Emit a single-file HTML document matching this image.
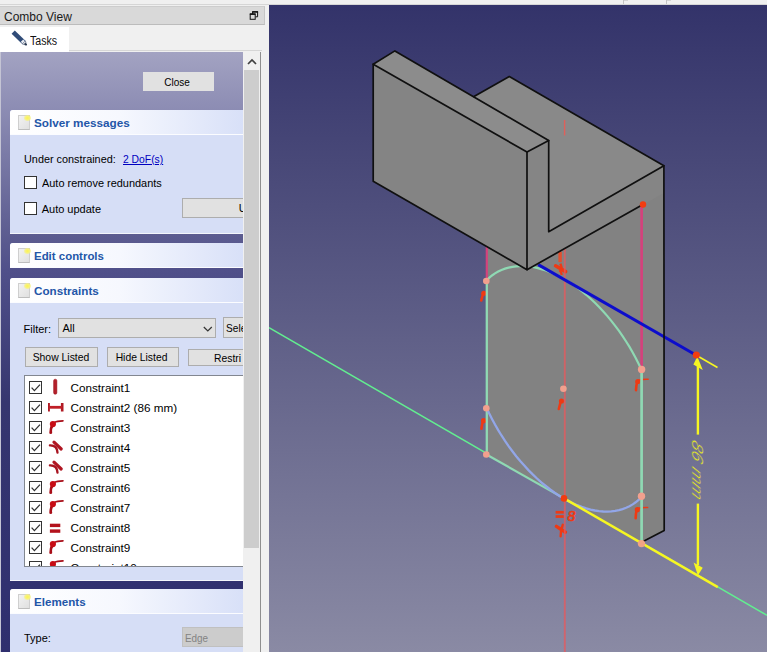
<!DOCTYPE html>
<html>
<head>
<meta charset="utf-8">
<title>FreeCAD Sketcher</title>
<style>
html,body{margin:0;padding:0;}
body{width:767px;height:652px;overflow:hidden;background:#f0f0f0;font-family:"Liberation Sans",sans-serif;font-size:11px;color:#000;position:relative;}
.abs{position:absolute;}
#topline{left:0;top:4.2px;width:767px;height:1px;background:#d6d6d6;}
#titlebar{left:0;top:6px;width:265px;height:19px;background:#d9d9d9;border-bottom:1px solid #bcbcbc;border-top:1px solid #cdcdcd;border-right:1px solid #c6c6c6;box-sizing:border-box;}
#titlebar span{position:absolute;left:4px;top:2.5px;font-size:12px;color:#1a1a1a;white-space:nowrap;}
#tab{left:0;top:27px;width:69px;height:25px;background:#fff;}
#tab span{position:absolute;left:30.2px;top:7px;font-size:12px;color:#111;transform:scaleX(0.885);transform-origin:left;white-space:nowrap;}
#tabline{left:69px;top:50px;width:193px;height:1px;background:#d6d6d6;}
#panel{left:1px;top:52px;width:242.4px;height:600px;overflow:hidden;background:linear-gradient(to bottom,#a3a3c2 0px,#8d8db4 55px,#5c5c90 183px,#50508a 218px,#36366f 350px,#313170 540px,#2f2f6e 600px);}
#panelborderL{left:0;top:52px;width:1.5px;height:600px;background:#c4c4d4;}
#sbtrack{left:243.4px;top:52px;width:17px;height:600px;background:#f0f0f0;}
#sbthumb{left:244px;top:70px;width:15.4px;height:478px;background:#cdcdcd;}
#panelborderR{left:260.4px;top:52px;width:1px;height:600px;background:#8f8f8f;}
#panelborderT{left:0;top:51.5px;width:261px;height:1px;background:#a8a8b4;}
.sec{position:absolute;left:9px;width:260px;background:#d6def6;border-radius:3px 0 0 0;border-bottom:1px solid #f4f6fc;box-sizing:border-box;}
.hdr{position:absolute;left:0;top:0;width:260px;height:25px;background:linear-gradient(to right,#ffffff 0,#f6f8fe 110px,#d8e0f8 234px);border-radius:3px 0 0 0;box-shadow:inset 0 -1px 0 #fbfcff;}
.hdr b{position:absolute;left:24.4px;top:6.7px;font-size:11px;color:#2356a8;font-weight:bold;white-space:nowrap;transform-origin:left;}
.ico{position:absolute;left:8px;top:5px;width:12px;height:14.5px;background:linear-gradient(135deg,#f2f2f2,#e0e0e0);border:1px solid #cfcfcf;border-bottom-color:#bdbdbd;box-sizing:border-box;}
.ico i{position:absolute;right:-1.5px;top:-1.5px;width:7px;height:6px;border-radius:3px;background:radial-gradient(ellipse,#fbf450 0,#f8f27a 40%,rgba(248,244,160,0) 100%);}
.btn{position:absolute;background:#e1e1e1;border:1px solid #adadad;box-sizing:border-box;text-align:center;font-size:11px;color:#000;white-space:nowrap;}
.btn span{display:inline-block;}
.cb{position:absolute;width:13px;height:13px;border:1px solid #333;background:#fff;box-sizing:border-box;}
.t{position:absolute;white-space:nowrap;transform-origin:left;}
.row{position:absolute;left:0;width:240px;height:20px;}
.ck{position:absolute;left:4px;top:3.5px;width:13px;height:13px;border:1px solid #333;box-sizing:border-box;background:#fff;}
.ck svg{position:absolute;left:-1px;top:-1px;}
.ci{position:absolute;left:23.2px;top:0.1px;}
.row span{position:absolute;left:45.5px;top:3.1px;font-size:11.7px;white-space:nowrap;color:#000;}
#view{left:269px;top:5px;width:498px;height:647px;overflow:hidden;background:linear-gradient(to bottom,#33336a 0,#8a8aa4 100%);}
</style>
</head>
<body>
<div class="abs" id="topline"></div>
<div class="abs" style="left:623px;top:0;width:1px;height:4px;background:#c4c4c4;"></div><div class="abs" style="left:624px;top:0;width:4px;height:1px;background:#d4d4d4;"></div><div class="abs" style="left:666px;top:0;width:1px;height:4px;background:#c4c4c4;"></div><div class="abs" style="left:667px;top:0;width:4px;height:1px;background:#d4d4d4;"></div>
<div class="abs" id="titlebar"><span>Combo View</span>
<svg class="abs" style="left:249px;top:3px;" width="11" height="12" viewBox="0 0 11 12"><path d="M3.6,4 V2 H8.6 V6.8 H6.6" fill="none" stroke="#111" stroke-width="1"/><path d="M3.1,1.8 H9.1" stroke="#111" stroke-width="1.4"/><rect x="1.2" y="4.3" width="5" height="5" fill="none" stroke="#111" stroke-width="1"/><path d="M0.8,4 H6.6" stroke="#111" stroke-width="1.5"/></svg>
</div>
<div class="abs" id="tab"><svg class="abs" style="left:10px;top:3px;" width="20" height="18" viewBox="0 0 20 18"><path d="M3.2,2.2 L13.8,12.4" stroke="#304c78" stroke-width="4.6" stroke-linecap="butt"/><path d="M12,10.6 L15.6,14.2" stroke="#e8ecf2" stroke-width="3.4"/><path d="M12.2,14 L16.4,15 L15.4,10.8 Z" fill="#f4f4f4" stroke="#50607c" stroke-width="0.7"/><path d="M14.6,13.4 L16.6,15.2" stroke="#26344c" stroke-width="1.6"/></svg><span>Tasks</span></div>
<div class="abs" id="tabline"></div>
<div class="abs" id="panelborderT"></div>
<div class="abs" id="panelborderL"></div>
<div class="abs" id="panel">
  <div class="btn" style="left:141.6px;top:20.2px;width:71.6px;height:18.8px;line-height:18.4px;border-color:#e1e1e1;"><span style="transform:scaleX(0.91);position:relative;left:-1px;">Close</span></div>

  <div class="sec" style="top:58px;height:124px;">
    <div class="hdr"><div class="ico"><i></i></div><b style="transform:scaleX(1.065);">Solver messages</b></div>
    <div class="t" style="left:13.7px;top:43px;transform:scaleX(0.987);">Under constrained:</div>
    <div class="t" style="left:112.6px;top:43px;color:#0000c0;text-decoration:underline;transform:scaleX(0.94);">2 DoF(s)</div>
    <div class="cb" style="left:14px;top:66.2px;"></div>
    <div class="t" style="left:31.7px;top:67px;transform:scaleX(0.994);">Auto remove redundants</div>
    <div class="cb" style="left:14px;top:92.2px;"></div>
    <div class="t" style="left:31.7px;top:93px;">Auto update</div>
    <div class="btn" style="left:172.4px;top:88px;width:90px;height:20.2px;line-height:18.6px;text-align:left;padding-left:55.3px;">U</div>
  </div>

  <div class="sec" style="top:191px;height:25px;border-bottom:none;">
    <div class="hdr"><div class="ico"><i></i></div><b style="transform:scaleX(1.04);">Edit controls</b></div>
  </div>

  <div class="sec" style="top:226px;height:303px;">
    <div class="hdr"><div class="ico"><i></i></div><b style="transform:scaleX(1.06);">Constraints</b></div>
    <div class="t" style="left:13.6px;top:44.6px;">Filter:</div>
    <div class="btn" style="left:48px;top:40px;width:157.5px;height:19.8px;text-align:left;padding-left:3.5px;line-height:18.6px;">All<svg class="abs" style="left:144px;top:6.5px;" width="10" height="7" viewBox="0 0 10 7"><path d="M0.8,1 L4.8,5 L8.8,1" fill="none" stroke="#333" stroke-width="1.2"/></svg></div>
    <div class="btn" style="left:213.2px;top:39.2px;width:60px;height:20.5px;text-align:left;padding-left:1.6px;line-height:21.6px;"><span style="transform:scaleX(0.92);transform-origin:left;">Sele</span></div>
    <div class="btn" style="left:15.3px;top:68.8px;width:72.7px;height:20.7px;line-height:19.4px;"><span style="transform:scaleX(0.945);position:relative;left:-0.9px;">Show Listed</span></div>
    <div class="btn" style="left:96.5px;top:68.8px;width:72.3px;height:20.7px;line-height:19.4px;"><span style="transform:scaleX(0.94);position:relative;left:-1.3px;">Hide Listed</span></div>
    <div class="btn" style="left:177.6px;top:71.3px;width:90px;height:16.3px;line-height:16px;text-align:left;padding-left:25px;"><span style="transform:scaleX(0.94);transform-origin:left;">Restri</span></div>
    <div class="abs" id="list" style="left:14px;top:97px;width:240px;height:191.6px;background:#fff;border:1px solid #828790;border-right:none;box-sizing:border-box;overflow:hidden;">
<div class="row" style="top:1.5px;"><div class="ck"><svg width="13" height="13" viewBox="0 0 13 13"><path d="M2.6,6.6 L5.4,9.6 L11,3.6" fill="none" stroke="#333" stroke-width="1.3"/></svg></div><svg class="ci" width="16" height="18" viewBox="0 0 16 18"><rect x="5.6" y="1.2" width="3.3" height="15" rx="1.5" fill="#b3202a" stroke="#9a1018" stroke-width="0.5"/></svg><span>Constraint1</span></div>
<div class="row" style="top:21.5px;"><div class="ck"><svg width="13" height="13" viewBox="0 0 13 13"><path d="M2.6,6.6 L5.4,9.6 L11,3.6" fill="none" stroke="#333" stroke-width="1.3"/></svg></div><svg class="ci" width="16" height="18" viewBox="0 0 16 18"><path d="M0.6,5 V13.5 M14.2,5 V13.5" stroke="#b01a24" stroke-width="2.6"/><path d="M1,9.3 H14" stroke="#c02028" stroke-width="2.8"/></svg><span>Constraint2 (86 mm)</span></div>
<div class="row" style="top:41.5px;"><div class="ck"><svg width="13" height="13" viewBox="0 0 13 13"><path d="M2.6,6.6 L5.4,9.6 L11,3.6" fill="none" stroke="#333" stroke-width="1.3"/></svg></div><svg class="ci" width="16" height="18" viewBox="0 0 16 18"><path d="M3.4,14.6 C2.6,10 3.6,6 6.5,4.4 C9,3.1 12,3.0 15,2.9" fill="none" stroke="#a80e18" stroke-width="1.6" stroke-linecap="round"/><path d="M2.6,14.8 C2.6,12 3.2,9 4.6,7" fill="none" stroke="#a80e18" stroke-width="2.6" stroke-linecap="round"/><circle cx="4.9" cy="6.1" r="3.1" fill="#c80c14"/></svg><span>Constraint3</span></div>
<div class="row" style="top:61.5px;"><div class="ck"><svg width="13" height="13" viewBox="0 0 13 13"><path d="M2.6,6.6 L5.4,9.6 L11,3.6" fill="none" stroke="#333" stroke-width="1.3"/></svg></div><svg class="ci" width="16" height="18" viewBox="0 0 16 18"><path d="M6,4.2 L13.2,11" stroke="#b01622" stroke-width="3.2" stroke-linecap="round" fill="none"/><path d="M1.9,7.4 C6.4,7.2 9.2,9.6 9.5,14.6" stroke="#a81420" stroke-width="2.3" stroke-linecap="round" fill="none"/></svg><span>Constraint4</span></div>
<div class="row" style="top:81.5px;"><div class="ck"><svg width="13" height="13" viewBox="0 0 13 13"><path d="M2.6,6.6 L5.4,9.6 L11,3.6" fill="none" stroke="#333" stroke-width="1.3"/></svg></div><svg class="ci" width="16" height="18" viewBox="0 0 16 18"><path d="M6,4.2 L13.2,11" stroke="#b01622" stroke-width="3.2" stroke-linecap="round" fill="none"/><path d="M1.9,7.4 C6.4,7.2 9.2,9.6 9.5,14.6" stroke="#a81420" stroke-width="2.3" stroke-linecap="round" fill="none"/></svg><span>Constraint5</span></div>
<div class="row" style="top:101.5px;"><div class="ck"><svg width="13" height="13" viewBox="0 0 13 13"><path d="M2.6,6.6 L5.4,9.6 L11,3.6" fill="none" stroke="#333" stroke-width="1.3"/></svg></div><svg class="ci" width="16" height="18" viewBox="0 0 16 18"><path d="M3.4,14.6 C2.6,10 3.6,6 6.5,4.4 C9,3.1 12,3.0 15,2.9" fill="none" stroke="#a80e18" stroke-width="1.6" stroke-linecap="round"/><path d="M2.6,14.8 C2.6,12 3.2,9 4.6,7" fill="none" stroke="#a80e18" stroke-width="2.6" stroke-linecap="round"/><circle cx="4.9" cy="6.1" r="3.1" fill="#c80c14"/></svg><span>Constraint6</span></div>
<div class="row" style="top:121.5px;"><div class="ck"><svg width="13" height="13" viewBox="0 0 13 13"><path d="M2.6,6.6 L5.4,9.6 L11,3.6" fill="none" stroke="#333" stroke-width="1.3"/></svg></div><svg class="ci" width="16" height="18" viewBox="0 0 16 18"><path d="M3.4,14.6 C2.6,10 3.6,6 6.5,4.4 C9,3.1 12,3.0 15,2.9" fill="none" stroke="#a80e18" stroke-width="1.6" stroke-linecap="round"/><path d="M2.6,14.8 C2.6,12 3.2,9 4.6,7" fill="none" stroke="#a80e18" stroke-width="2.6" stroke-linecap="round"/><circle cx="4.9" cy="6.1" r="3.1" fill="#c80c14"/></svg><span>Constraint7</span></div>
<div class="row" style="top:141.5px;"><div class="ck"><svg width="13" height="13" viewBox="0 0 13 13"><path d="M2.6,6.6 L5.4,9.6 L11,3.6" fill="none" stroke="#333" stroke-width="1.3"/></svg></div><svg class="ci" width="16" height="18" viewBox="0 0 16 18"><rect x="1.9" y="5.7" width="10.4" height="3.4" fill="#b3121c"/><rect x="1.9" y="11.4" width="10.4" height="3.4" fill="#b3121c"/></svg><span>Constraint8</span></div>
<div class="row" style="top:161.5px;"><div class="ck"><svg width="13" height="13" viewBox="0 0 13 13"><path d="M2.6,6.6 L5.4,9.6 L11,3.6" fill="none" stroke="#333" stroke-width="1.3"/></svg></div><svg class="ci" width="16" height="18" viewBox="0 0 16 18"><path d="M3.4,14.6 C2.6,10 3.6,6 6.5,4.4 C9,3.1 12,3.0 15,2.9" fill="none" stroke="#a80e18" stroke-width="1.6" stroke-linecap="round"/><path d="M2.6,14.8 C2.6,12 3.2,9 4.6,7" fill="none" stroke="#a80e18" stroke-width="2.6" stroke-linecap="round"/><circle cx="4.9" cy="6.1" r="3.1" fill="#c80c14"/></svg><span>Constraint9</span></div>
<div class="row" style="top:181.5px;"><div class="ck"><svg width="13" height="13" viewBox="0 0 13 13"><path d="M2.6,6.6 L5.4,9.6 L11,3.6" fill="none" stroke="#333" stroke-width="1.3"/></svg></div><svg class="ci" width="16" height="18" viewBox="0 0 16 18"><path d="M3.4,14.6 C2.6,10 3.6,6 6.5,4.4 C9,3.1 12,3.0 15,2.9" fill="none" stroke="#a80e18" stroke-width="1.6" stroke-linecap="round"/><path d="M2.6,14.8 C2.6,12 3.2,9 4.6,7" fill="none" stroke="#a80e18" stroke-width="2.6" stroke-linecap="round"/><circle cx="4.9" cy="6.1" r="3.1" fill="#c80c14"/></svg><span>Constraint10</span></div>
</div>
  </div>

  <div class="sec" style="top:537.3px;height:80px;border-bottom:none;">
    <div class="hdr"><div class="ico"><i></i></div><b style="transform:scaleX(1.055);">Elements</b></div>
    <div class="t" style="left:14px;top:43px;">Type:</div>
    <div class="abs" style="left:171.5px;top:37.3px;width:90px;height:20.5px;background:#cccccc;border:1px solid #c0c0c0;box-sizing:border-box;color:#838383;line-height:21px;padding-left:2.6px;"><span style="display:inline-block;transform:scaleX(0.9);transform-origin:left;">Edge</span></div>
  </div>
</div>
<div class="abs" id="sbtrack"></div>
<div class="abs" id="sbthumb"></div>
<svg class="abs" style="left:247px;top:57.6px;" width="10" height="8" viewBox="0 0 10 8"><path d="M1,6 L5,2 L9,6" fill="none" stroke="#404040" stroke-width="1.7"/></svg>
<div class="abs" id="panelborderR"></div>
<div class="abs" id="view">
<svg width="498" height="647" viewBox="269 5 498 647" style="position:absolute;left:0;top:0;">
<!-- axis lines -->
<line x1="269" y1="327.7" x2="767" y2="615.3" stroke="#62ee90" stroke-width="1.5"/>
<!-- big lower face -->
<polygon points="486.4,245 527,269.7 548.7,231.7 663.9,165.7 664,530.5 644,541 641.7,543.5 564,498.4 486.4,454.2" fill="#828282"/>
<!-- block top face -->
<polygon points="474,96.5 509.3,76.5 663.9,165.7 548.7,231.7 548.7,140.5" fill="#898989"/>
<g id="icons" fill="#ee3a14" stroke="#ee3a14" stroke-width="0">
<circle cx="483.8" cy="293.3" r="2.6"/><path d="M483.2,293.3 Q482.2,297.3 481.2,300.5" stroke-width="2.6" fill="none" stroke-linecap="round"/>
<circle cx="483.6" cy="420.7" r="2.6"/><path d="M483.0,420.7 Q482.0,424.7 481.40000000000003,428.7" stroke-width="2.6" fill="none" stroke-linecap="round"/>
<circle cx="561.5" cy="401" r="2.6"/><path d="M560.9,401 Q559.9,405 558.8,409" stroke-width="2.6" fill="none" stroke-linecap="round"/>
<circle cx="637.8" cy="381.5" r="2.6"/><path d="M637.1999999999999,381.5 Q636.1999999999999,385.5 636.0,390.1" stroke-width="2.6" fill="none" stroke-linecap="round"/><path d="M638.8,380.1 Q642.8,379.1 648.1999999999999,379.3" stroke-width="1.4" fill="none" stroke-linecap="round"/>
<circle cx="637.3" cy="509.7" r="2.6"/><path d="M636.6999999999999,509.7 Q635.6999999999999,513.7 635.6999999999999,518.3" stroke-width="2.6" fill="none" stroke-linecap="round"/><path d="M638.3,508.3 Q642.3,507.3 647.6999999999999,507.5" stroke-width="1.4" fill="none" stroke-linecap="round"/>
<rect x="558.4" y="251.5" width="3.4" height="10.8" rx="0.8" fill="#e2502e"/>
<path d="M555.6,265.8 L565.6,271.6" stroke-width="3.6" fill="none" stroke-linecap="round"/><path d="M560.4,263.6 L561.8,268" stroke-width="2.4" fill="none"/><path d="M559.6,270 Q561.4,272.4 561.8,275" stroke-width="2.2" fill="none"/>
<rect x="555.6" y="510.9" width="8.2" height="2.7"/><rect x="555.6" y="515.2" width="8.2" height="2.7"/>
<text x="567.6" y="521.4" font-family="Liberation Sans, sans-serif" font-size="14" font-style="italic" stroke-width="0.7">8</text>
<path d="M556.4,526.4 L565.4,532.2" stroke-width="3.4" fill="none" stroke-linecap="round"/><path d="M562.8,524.8 Q560.4,530.6 560.6,536.4" stroke-width="2.4" fill="none" stroke-linecap="round"/>
</g>
<!-- sketch -->
<g fill="none" stroke-linecap="butt">
<line x1="564.8" y1="249" x2="564.8" y2="652" stroke="#e8585c" stroke-opacity="0.75" stroke-width="1.9"/>
<line x1="486.8" y1="244" x2="486.8" y2="281" stroke="#d4427c" stroke-width="2.2"/>
<line x1="486.8" y1="281" x2="486.8" y2="454.5" stroke="#8fd9b3" stroke-width="2.3"/>
<line x1="641.6" y1="204.5" x2="641.6" y2="369" stroke="#d4427c" stroke-width="2.7"/>
<line x1="641.6" y1="369" x2="641.6" y2="543.5" stroke="#8fd9b3" stroke-width="2.7"/>
<line x1="486.4" y1="454.5" x2="564" y2="498.4" stroke="#8fd9b3" stroke-width="2.2"/>
<path id="arcU" d="M486.4,280.5 L489.1,277.9 L492.0,275.5 L495.0,273.4 L498.2,271.5 L501.5,269.9 L505.0,268.6 L508.6,267.6 L512.4,266.8 L516.2,266.3 L520.2,266.1 L524.3,266.1 L528.4,266.4 L532.7,267.0 L537.0,267.9 L541.3,269.1 L545.8,270.5 L550.2,272.2 L554.7,274.2 L559.2,276.4 L563.8,278.9 L568.3,281.6 L572.8,284.5 L577.3,287.7 L581.8,291.2 L586.2,294.8 L590.6,298.7 L594.9,302.8 L599.1,307.0 L603.3,311.5 L607.4,316.1 L611.3,320.9 L615.2,325.8 L619.0,330.9 L622.6,336.1 L626.1,341.5 L629.5,346.9 L632.7,352.5 L635.7,358.1 L638.6,363.8 L641.3,369.5" stroke="#8fd9b3" stroke-width="2.2"/>
<path id="arcL" d="M486.4,407.4 L489.1,413.2 L492.0,418.9 L495.0,424.5 L498.2,430.1 L501.5,435.5 L505.0,440.9 L508.6,446.1 L512.4,451.2 L516.2,456.2 L520.2,461.0 L524.3,465.6 L528.4,470.1 L532.7,474.4 L537.0,478.5 L541.3,482.4 L545.8,486.0 L550.2,489.5 L554.7,492.7 L559.2,495.7 L563.8,498.5 L568.3,501.0 L572.8,503.2 L577.3,505.2 L581.8,506.9 L586.2,508.4 L590.6,509.6 L594.9,510.5 L599.1,511.1 L603.3,511.5 L607.4,511.6 L611.3,511.4 L615.2,510.9 L619.0,510.1 L622.6,509.1 L626.1,507.8 L629.5,506.2 L632.7,504.4 L635.7,502.3 L638.6,500.0 L641.3,497.4" stroke="#92a6e8" stroke-width="2.3"/>
</g>
<!-- blue line -->
<line x1="538.2" y1="264.6" x2="696.3" y2="355.3" stroke="#0d0dcc" stroke-width="3"/>
<!-- plate faces -->
<polygon points="373.2,64.2 527,152 527,269.7 373.2,181.3" fill="#848484"/>
<polygon points="373.2,64.2 394.9,50.9 548.7,140.5 527,152" fill="#8c8c8c"/>
<polygon points="527,152 548.7,140.5 548.7,231.7 663.9,165.7 663.9,193 527,269.7" fill="#858585"/>
<!-- edges -->
<g stroke="#101010" stroke-width="1.7" fill="none" stroke-linecap="round" stroke-linejoin="round">
<path d="M373.2,64.2 L527,152 L527,269.7 L373.2,181.3 Z"/>
<path d="M373.2,64.2 L394.9,50.9 L548.7,140.5 L527,152"/>
<path d="M548.7,140.5 L548.7,231.7 L663.9,165.7"/>
<path d="M474,96.5 L509.3,76.5 L663.9,165.7 L664.2,530.5 L644,541"/>
<path d="M527,269.7 L642.5,204.8"/>
</g>
<line x1="564.6" y1="120" x2="564.6" y2="135.5" stroke="#e0605a" stroke-width="1.4"/>
<!-- yellow -->
<g stroke="#f6f622" fill="none">
<line x1="564" y1="498.4" x2="717.8" y2="587.2" stroke-width="2.5"/>
<line x1="696.3" y1="355.3" x2="717.5" y2="367.5" stroke-width="1.6"/>
<line x1="697.9" y1="366" x2="697.9" y2="434.6" stroke-width="2.4"/>
<line x1="697.9" y1="503.6" x2="697.9" y2="565" stroke-width="2.4"/>
</g>
<polygon points="697.3,356.5 702.8,370 693.4,364.6" fill="#f6f622"/>
<polygon points="697.9,575.4 702.7,567.8 693.6,562.4" fill="#f6f622"/>
<text transform="matrix(0,0.8165,-0.7071,-0.408,691.8,438.6)" font-family="Liberation Sans, sans-serif" font-size="22.6" word-spacing="1.5" fill="#eaea22" font-style="italic" stroke="#73739b" stroke-width="0.55" paint-order="fill stroke">86 mm</text>
<!-- points -->
<g fill="#f2a08e">
<circle cx="486.3" cy="281" r="3.3"/>
<circle cx="486.3" cy="408.2" r="3.3"/>
<circle cx="486.3" cy="454.5" r="3.3"/>
<circle cx="563.4" cy="388.8" r="3.3"/>
<circle cx="641.6" cy="369.4" r="3.7"/>
<circle cx="641.5" cy="496.2" r="3.7"/>
<circle cx="641.5" cy="543.6" r="3.7" fill="#f2a484"/>
</g>
<g fill="#f23c10">
<circle cx="643" cy="204.5" r="3.2"/>
<circle cx="564" cy="498.4" r="3.3"/>
<circle cx="696.3" cy="355" r="3.6"/>
</g>

</svg>
</div>
</body>
</html>
